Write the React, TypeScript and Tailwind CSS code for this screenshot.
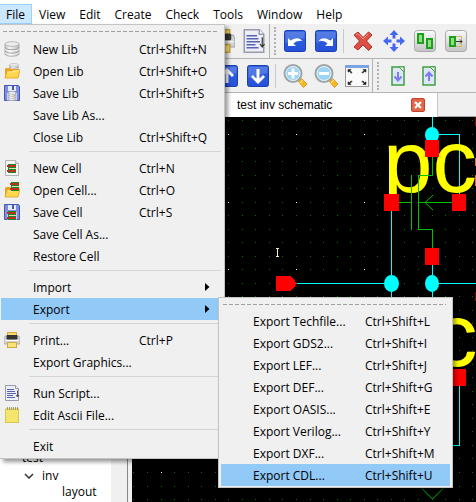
import type { ReactNode } from "react";

const menuNames = ["View", "Edit", "Create", "Check", "Tools", "Window", "Help"];

type Entry =
  | { kind: "item"; label: string; keys?: string; icon?: ReactNode; sub?: boolean }
  | { kind: "rule" };

function Svg({ size, className, children }: { size: number; className?: string; children: ReactNode }) {
  return (
    <svg width={size} height={size} viewBox={`0 0 ${size} ${size}`} className={className} aria-hidden="true">
      {children}
    </svg>
  );
}

/* ---------- 16px menu icons ---------- */

function Cylinder({ x = 0, y = 0, w = 16, h = 16 }: { x?: number; y?: number; w?: number; h?: number }) {
  return (
    <svg x={x} y={y} width={w} height={h} viewBox="0 0 16 16" preserveAspectRatio="none">
      <path d="M1 3v10c0 3 14 3 14 0V3z" fill="url(#steel)" stroke="#a5a5a5" strokeWidth=".8" />
      <ellipse cx="8" cy="3" rx="7" ry="2.3" fill="#ededed" stroke="#aaa" strokeWidth=".8" />
      <path d="M1 6.5c0 3 14 3 14 0M1 10c0 3 14 3 14 0" fill="none" stroke="#999" />
      <path d="M1 7.6c0 3 14 3 14 0M1 11c0 3 14 3 14 0" fill="none" stroke="#fff" strokeWidth=".8" />
    </svg>
  );
}

function Chip({ x, y }: { x: number; y: number }) {
  return (
    <g transform={`translate(${x} ${y})`}>
      <rect x="1" y="0" width="8" height="9" fill="#168a2c" />
      <rect x="0" y="1" width="9" height="2" fill="#b8321c" />
      <rect x="2" y="4" width="7" height="1" fill="#e8d8a8" />
      <rect x="0" y="6" width="9" height="2" fill="#b8321c" />
    </g>
  );
}

function Floppy() {
  return (
    <>
      <path d="M.5.5h14l1 1v14H.5z" fill="#7d8fdc" stroke="#4356b4" />
      <rect x="4" y="1" width="8" height="5" fill="#e6eafa" />
      <rect x="8" y="1" width="2" height="4" fill="#4658b8" />
      <rect x="3" y="8" width="10" height="7.5" fill="#c4ccf2" />
    </>
  );
}

function Folder() {
  return (
    <>
      <path d="M1 6l1-1h4l1 1h7v9H1z" fill="#e9a626" />
      <path d="M3 8h5l1-1h7l-2 8H1z" fill="#ffd74e" stroke="#e5a01c" strokeWidth=".8" />
      <path d="M3.5 9h5l1-1H15" stroke="#fff0a0" fill="none" />
    </>
  );
}

const newLib = <Svg size={16}><Cylinder /></Svg>;
const openLib = <Svg size={16}><Cylinder x={5} y={0} w={10} h={10} /><Folder /></Svg>;
const saveLib = <Svg size={16}><Floppy /><Cylinder x={4} y={6} w={8} h={10} /></Svg>;
const newCell = (
  <Svg size={16}>
    <path d="M1.5.5h10l3 3v12h-13z" fill="#f5f5f5" stroke="#b3b3b3" />
    <path d="M11.5.5v3h3" fill="#ddd" stroke="#b3b3b3" />
    <Chip x={3} y={4} />
  </Svg>
);
const openCell = <Svg size={16}><Folder /><Chip x={6} y={0} /></Svg>;
const saveCell = <Svg size={16}><Floppy /><Chip x={3} y={7} /></Svg>;

function PrinterArt() {
  return (
    <>
      <rect x="3.5" y=".5" width="9" height="4" fill="#f6dc6a" stroke="#d0a83c" />
      <path d="M1 4h14l1 3v5H0V7z" fill="#d2d2d2" stroke="#999" strokeWidth=".6" />
      <rect x="2.5" y="3" width="11" height="4.5" rx="1" fill="#343434" />
      <rect x="1" y="8" width="14" height="1" fill="#f8f8f8" />
      <rect x="3.5" y="10.5" width="9" height="5" fill="#f9e27c" stroke="#d0a83c" />
    </>
  );
}
function ScriptArt() {
  return (
    <>
      <path d="M1.5.5h10l3 3v12h-13z" fill="#eceef8" stroke="#9a9aa8" />
      <path d="M11.5.5v3h3" fill="#fff" stroke="#9a9aa8" />
      <path d="M3 4.5h7M3 6.5h8M3 8.5h9M3 10.5h6M3 12.5h8" stroke="#5a62b4" />
      <path d="M13.5 5.5v6M12 10l1.5 2 1.5-2" stroke="#333" fill="none" strokeWidth=".8" />
    </>
  );
}
const printIcon = <Svg size={16}><PrinterArt /></Svg>;
const scriptIcon = <Svg size={16}><ScriptArt /></Svg>;
const noteIcon = (
  <Svg size={16}>
    <rect x="1.5" y="2" width="13" height="13.5" fill="#f4e56c" stroke="#d8c650" />
    <path d="M3.5 0v3M5.5 0v3M7.5 0v3M9.5 0v3M11.5 0v3M13.5 0v3" stroke="#8f8a60" strokeWidth=".8" />
  </Svg>
);

const fileMenu: Entry[] = [
  { kind: "item", label: "New Lib", keys: "Ctrl+Shift+N", icon: newLib },
  { kind: "item", label: "Open Lib", keys: "Ctrl+Shift+O", icon: openLib },
  { kind: "item", label: "Save Lib", keys: "Ctrl+Shift+S", icon: saveLib },
  { kind: "item", label: "Save Lib As..." },
  { kind: "item", label: "Close Lib", keys: "Ctrl+Shift+Q" },
  { kind: "rule" },
  { kind: "item", label: "New Cell", keys: "Ctrl+N", icon: newCell },
  { kind: "item", label: "Open Cell...", keys: "Ctrl+O", icon: openCell },
  { kind: "item", label: "Save Cell", keys: "Ctrl+S", icon: saveCell },
  { kind: "item", label: "Save Cell As..." },
  { kind: "item", label: "Restore Cell" },
  { kind: "rule" },
  { kind: "item", label: "Import", sub: true },
  { kind: "item", label: "Export", sub: true },
  { kind: "rule" },
  { kind: "item", label: "Print...", keys: "Ctrl+P", icon: printIcon },
  { kind: "item", label: "Export Graphics..." },
  { kind: "rule" },
  { kind: "item", label: "Run Script...", icon: scriptIcon },
  { kind: "item", label: "Edit Ascii File...", icon: noteIcon },
  { kind: "rule" },
  { kind: "item", label: "Exit" },
];

const exportMenu = [
  ["Export Techfile...", "Ctrl+Shift+L"],
  ["Export GDS2...", "Ctrl+Shift+I"],
  ["Export LEF...", "Ctrl+Shift+J"],
  ["Export DEF...", "Ctrl+Shift+G"],
  ["Export OASIS...", "Ctrl+Shift+E"],
  ["Export Verilog...", "Ctrl+Shift+Y"],
  ["Export DXF...", "Ctrl+Shift+M"],
  ["Export CDL...", "Ctrl+Shift+U"],
];

function TearLine() {
  return (
    <svg className="block h-3 w-full" aria-hidden="true">
      <line x1="3" y1="6.5" x2="100%" y2="6.5" stroke="#a0a0a0" strokeDasharray="4 2" shapeRendering="crispEdges" />
    </svg>
  );
}

function ExportMenu() {
  return (
    <div
      role="menu"
      aria-label="Export"
      className="absolute left-[217px] -top-px z-20 w-[235px] border border-[#c4c4c4] bg-[#f0f0f0] pb-px shadow-[3px_3px_4px_rgba(0,0,0,0.35)]"
    >
      <div className="pr-[6px] pl-px"><TearLine /></div>
      <div className="px-[2px]">
        {exportMenu.map(([label, keys]) => (
          <button
            key={label}
            role="menuitem"
            className={
              "grid h-[22px] w-full grid-cols-[112px_1fr] items-center pt-[2px] pl-8 text-left whitespace-nowrap " +
              (label === "Export CDL..." ? "bg-[#91c9f7]" : "")
            }
          >
            <span>{label}</span>
            <span>{keys}</span>
          </button>
        ))}
      </div>
    </div>
  );
}

function FileMenu() {
  return (
    <div
      role="menu"
      aria-label="File"
      className="absolute top-full left-0 z-10 w-[225px] border-y border-r border-[#c4c4c4] bg-[#f0f0f0] pb-px shadow-[3px_3px_4px_rgba(0,0,0,0.4)]"
    >
      <div className="pr-[7px]"><TearLine /></div>
      <div className="pt-px pr-[3px] pl-px">
        {fileMenu.map((e, i) =>
          e.kind === "rule" ? (
            <div key={i} className="flex h-[9px] pt-[3px] pl-7"><div className="h-px w-full bg-[#d4d4d4]" /></div>
          ) : (
            <div key={i} className="relative">
              <button
                role="menuitem"
                className={
                  "grid h-[22px] w-full grid-cols-[29px_106px_1fr_16px] items-center pl-[3px] text-left whitespace-nowrap " +
                  (e.label === "Export" ? "bg-[#91c9f7]" : "")
                }
              >
                <span>{e.icon}</span>
                <span className="pt-[2px]">{e.label}</span>
                <span className="pt-[2px]">{e.keys}</span>
                {e.sub && (
                  <svg width="5" height="8" viewBox="0 0 5 8" aria-hidden="true"><path d="M0 0l4.5 4L0 8z" /></svg>
                )}
              </button>
              {e.label === "Export" && <ExportMenu />}
            </div>
          ),
        )}
      </div>
    </div>
  );
}

/* ---------- 24px toolbar icons ---------- */

function BlueTile({ d }: { d: string }) {
  return (
    <Svg size={24}>
      <rect x="1.5" y="1.5" width="21" height="21" rx="2" fill="url(#blue)" stroke="#1c3fae" />
      <path d="M2.5 3h19v6q-9 1-19 5z" fill="#fff" opacity=".16" />
      <path d={d} fill="#fff" />
    </Svg>
  );
}
const undo = <BlueTile d="M5 9v8h8l-2.500-2.500q3-3.500 9-2.500-4-5-12-.500z" />;
const redo = <BlueTile d="M19 9v8h-8l2.500-2.500q-3-3.500-9-2.500 4-5 12-.500z" />;
const up = <BlueTile d="M12 4l7 7-2 2-3.500-3.500V19h-3V9.500L7 13l-2-2z" />;
const down = <BlueTile d="M12 20l7-7-2-2-3.500 3.500V5h-3v9.500L7 11l-2 2z" />;

const cross = (
  <Svg size={24}>
    <path d="M3 6l4-3 5 5.500L17.500 3 21 6l-5.500 6 5.500 6-3.500 3.500-5.500-5.500L7 21l-4-3 5.500-6z" fill="#dc5044" stroke="#b03028" />
    <path d="M5 6l2-1.500 5 5.500 5-5" stroke="#f09a8c" fill="none" />
  </Svg>
);
const move = (
  <Svg size={24}>
    <g fill="#4667f2">
      <path id="arm" d="M12 1l4.500 5h-3v3.500h-3V6h-3z" />
      <use href="#arm" transform="rotate(90 12 12)" />
      <use href="#arm" transform="rotate(180 12 12)" />
      <use href="#arm" transform="rotate(270 12 12)" />
    </g>
  </Svg>
);
const tile = <rect x="1.5" y="1.5" width="21" height="21" rx="3" fill="url(#grey)" stroke="#aaa" />;
const copy = (
  <Svg size={24}>
    {tile}
    <rect x="5" y="5" width="5" height="9" fill="#8ee07c" stroke="#1ea01e" strokeWidth="2" />
    <rect x="14" y="10" width="5" height="9" fill="#8ee07c" stroke="#1ea01e" strokeWidth="2" />
  </Svg>
);
const stretch = (
  <Svg size={24}>
    {tile}
    <path d="M11 7.500h6.500v10H11" stroke="#c8b870" fill="none" />
    <rect x="6" y="8" width="5" height="9" fill="#8ee07c" stroke="#1ea01e" strokeWidth="2" />
    <path d="M12 12.500h6M16 10.500l2 2-2 2" stroke="#333" fill="none" />
  </Svg>
);
const orange = (
  <Svg size={24}>
    <rect x="3" y="7" width="14" height="11" fill="#f0a050" stroke="#d88428" />
  </Svg>
);
function Zoom({ plus }: { plus?: boolean }) {
  return (
    <Svg size={24}>
      <path d="M15.500 17.500l3-3 5.500 5.500-3.500 3.500z" fill="#f8b820" stroke="#d09018" strokeWidth=".8" />
      <path d="M17 19l3-3" stroke="#fff0a0" />
      <circle cx="10" cy="9.500" r="8.500" fill="#9cd4f2" stroke="#a2a2a2" strokeWidth="2" />
      <circle cx="10" cy="9.500" r="7" fill="none" stroke="#e4f4fc" />
      <path d={plus ? "M5 9.500h10M10 4.500v10" : "M5 9.500h10"} stroke="#fff" strokeWidth="3" />
    </Svg>
  );
}
const fit = (
  <Svg size={24}>
    <rect x=".5" y="1.500" width="23" height="21" fill="#fbfbfb" stroke="#999" />
    <rect x="0" y="1" width="24" height="3" fill="#7ba4e4" />
    <path d="M3 5.500h3l-1 1 2 2-.700.700-2-2-1.300 1zM21 5.500h-3l1 1-2 2 .700.700 2-2 1.300 1zM3 20.500h3l-1-1 2-2-.700-.700-2 2-1.300-1zM21 20.500h-3l1-1-2-2 .700-.700 2 2 1.300-1z" fill="#222" stroke="#222" strokeWidth=".6" />
  </Svg>
);
function Sheet({ d }: { d: string }) {
  return (
    <Svg size={24}>
      <rect x="6" y="3" width="12" height="18" fill="#dfe6fa" stroke="#3fa040" strokeWidth="1.5" />
      <path d="M13 3h5v5z" fill="#fff" stroke="#3fa040" />
      <path d={d} stroke="#7c7cf0" strokeWidth="2" fill="none" />
    </Svg>
  );
}

function Tool({ label, children }: { label: string; children: ReactNode }) {
  return <button aria-label={label} className="flex w-[31px] shrink-0 justify-center">{children}</button>;
}
function Grip() {
  return <div className="mr-0.5 ml-1 h-7 w-[3px] shrink-0 border-l-2 border-dotted border-[#b0b0b0]" />;
}
function EndBar() {
  return <div className="h-full w-px shrink-0 bg-[#b4b4b4]" />;
}
function Split() {
  return <div className="mr-[3px] ml-0.5 h-6 w-px shrink-0 bg-[#c8c8c8]" />;
}

/* ---------- schematic ---------- */

const dots: { x: number; y: number; major: boolean }[] = [];
for (let i = -12; i <= 13; i++)
  for (let j = -1; j <= 27; j++)
    dots.push({
      x: Math.round(164 + i * 13.55),
      y: Math.round(17 + j * 13.52),
      major: i % 5 === 0 && j % 5 === 0,
    });

function Schematic() {
  return (
    <svg width="344" height="385" viewBox="0 0 344 385" className="block" role="img" aria-label="inv schematic">
      <g shapeRendering="crispEdges">
        {dots.map((d) => (
          <rect key={`${d.x}-${d.y}`} x={d.x} y={d.y} width="1" height="1" fill={d.major ? "#fff" : "#007800"} />
        ))}
        <path
          d="M300.500 0v14M300.500 17.500h27V86M165 166.500h94M259.500 94v90M300.500 148v36M300.500 166.500h44M327.500 268v60h-20"
          stroke="#00ffff"
          fill="none"
        />
      </g>
      <g fill="#ffff00" fontSize="89" className="font-['Liberation_Sans',Arial,sans-serif]">
        <text x="251" y="75">pc</text>
        <text x="301" y="249">c</text>
      </g>
      <g shapeRendering="crispEdges">
        <path d="M300.500 40v18h-14v54h14v22M279.500 58v55M267 85.500h12M286 85.500h35" stroke="#00c000" fill="none" />
        <path d="M343.500 0v9M343.500 175v9" stroke="#800000" />
        <path d="M343.500 41v8M343.500 58v11" stroke="#f07000" />
      </g>
      <path d="M301 78l-8 7.500 8 7.500M290 371.500l10.500 10.500 10.500-10.500" stroke="#00c000" fill="none" />
      <g fill="#00ffff">
        <ellipse cx="300" cy="18" rx="7" ry="8" />
        <ellipse cx="259.500" cy="166.500" rx="7.500" ry="8.500" />
        <ellipse cx="300" cy="166.500" rx="7" ry="8.500" />
      </g>
      <g fill="#f00" shapeRendering="crispEdges">
        <rect x="293" y="23" width="14" height="17" />
        <rect x="252" y="77" width="15" height="17" />
        <rect x="320" y="77" width="14" height="17" />
        <rect x="293" y="131" width="14" height="17" />
        <rect x="320" y="252" width="14" height="17" />
        <path d="M144 159h15l6 7.500-6 7.500h-15z" />
      </g>
      <path d="M144 131.500h3M145.500 131v9M144 139.500h3" stroke="#ffe8c0" fill="none" />
    </svg>
  );
}

export default function App() {
  return (
    <div className="flex h-screen flex-col overflow-hidden bg-[#f0f0f0] font-['Open_Sans','Noto_Sans',sans-serif] text-xs leading-4 text-black">
      <svg width="0" height="0" className="absolute" aria-hidden="true">
        <defs>
          <linearGradient id="steel"><stop stopColor="#c4c4c4" /><stop offset=".35" stopColor="#f6f6f6" /><stop offset="1" stopColor="#b8b8b8" /></linearGradient>
          <linearGradient id="blue" x2="0" y2="1"><stop stopColor="#3566e0" /><stop offset="1" stopColor="#2450d8" /></linearGradient>
          <linearGradient id="grey" x2="0" y2="1"><stop stopColor="#fafafa" /><stop offset="1" stopColor="#c4c4c4" /></linearGradient>
        </defs>
      </svg>

      <nav className="flex h-6 shrink-0 items-end bg-white">
        <div className="relative">
          <button className="h-5 w-8 border border-l-0 border-[#99d1ff] bg-[#cce8ff] pt-px pl-1.5 text-left">File</button>
          <FileMenu />
        </div>
        {menuNames.map((name) => (
          <button key={name} className="h-5 px-[7px] pt-px">{name}</button>
        ))}
      </nav>

      <div className="flex h-[35px] shrink-0 items-center overflow-hidden border-b border-[#b4b4b4] pl-[207px]">
        <Tool label="Print"><svg width="24" height="24" viewBox="0 0 16 16" aria-hidden="true"><PrinterArt /></svg></Tool>
        <Tool label="Run script"><svg width="24" height="24" viewBox="0 0 16 16" aria-hidden="true"><ScriptArt /></svg></Tool>
        <EndBar />
        <Grip />
        <Tool label="Undo">{undo}</Tool>
        <Tool label="Redo">{redo}</Tool>
        <Split />
        <Tool label="Delete">{cross}</Tool>
        <Tool label="Move">{move}</Tool>
        <Tool label="Copy">{copy}</Tool>
        <Tool label="Stretch">{stretch}</Tool>
        <Tool label="Rotate">{orange}</Tool>
      </div>
      <div className="flex h-[34px] shrink-0 items-center overflow-hidden border-b border-[#b4b4b4] pl-[211px]">
        <Tool label="Up">{up}</Tool>
        <Tool label="Down">{down}</Tool>
        <Split />
        <Tool label="Zoom in"><Zoom plus /></Tool>
        <Tool label="Zoom out"><Zoom /></Tool>
        <Tool label="Fit">{fit}</Tool>
        <EndBar />
        <Grip />
        <Tool label="Descend"><Sheet d="M12 8v8M8.500 12.500l3.500 4 3.500-4" /></Tool>
        <Tool label="Ascend"><Sheet d="M12 17V9M8.500 12.500l3.500-4 3.500 4" /></Tool>
      </div>

      <main className="flex min-h-0 flex-1">
        <aside className="mr-1 flex w-32 shrink-0 border-r border-[#828790]">
          <ul className="flex w-[111px] flex-col justify-end bg-white pb-px">
            <li className="h-[17px] pl-[22px]">test</li>
            <li className="flex h-[17px] items-center gap-2 pl-6">
              <svg width="10" height="6" viewBox="0 0 10 6" aria-hidden="true"><path d="M1 1l4 4 4-4" stroke="#333" strokeWidth="1.5" fill="none" /></svg>
              inv
            </li>
            <li className="h-[17px] pl-[62px]">layout</li>
          </ul>
        </aside>
        <section className="flex min-w-0 flex-1 flex-col">
          <div className="flex h-6 shrink-0 border-b border-[#a8a8a8]">
            <div className="-mb-px flex w-[306px] items-center justify-between border-r border-[#c8c8c8] bg-white pr-3 pl-[105px] font-['Liberation_Sans',Arial,sans-serif]">
              <span>test inv schematic</span>
              <button aria-label="Close tab">
                <Svg size={14}>
                  <rect x=".5" y=".5" width="13" height="13" rx="1.5" fill="#e0684a" stroke="#c8402c" />
                  <path d="M4 4l6 6M10 4l-6 6" stroke="#fff" strokeWidth="2.2" />
                </Svg>
              </button>
            </div>
          </div>
          <div className="min-h-0 flex-1 overflow-hidden bg-black"><Schematic /></div>
        </section>
      </main>
    </div>
  );
}
